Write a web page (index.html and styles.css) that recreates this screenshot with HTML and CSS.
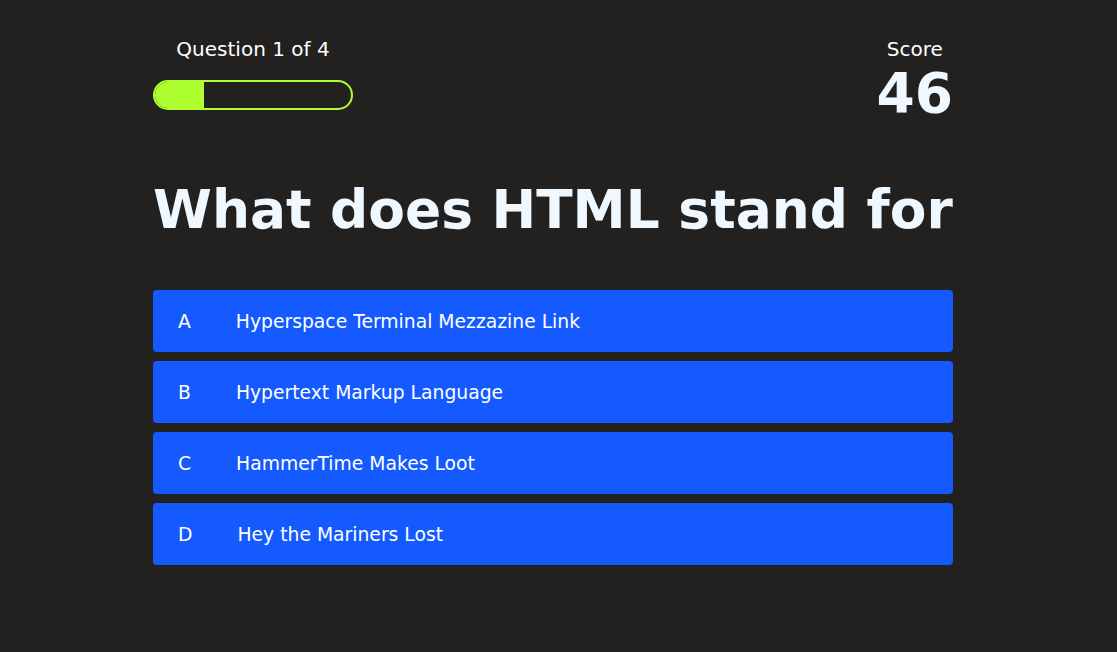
FILE: index.html
```html
<!DOCTYPE html>
<html lang="en">
<head>
<meta charset="utf-8">
<title>Quiz</title>
<link rel="stylesheet" href="styles.css">
</head>
<body>
<main class="quiz">
  <header class="hud">
    <div class="hud-item">
      <p class="hud-label">Question 1 of 4</p>
      <div class="progress"><div class="progress-fill" style="width: 25%"></div></div>
    </div>
    <div class="hud-item score">
      <p class="hud-label">Score</p>
      <p class="score-value">46</p>
    </div>
  </header>
  <h1 class="question">What does HTML stand for</h1>
  <ul class="choices">
    <li class="choice"><span class="choice-prefix">A</span><span class="choice-text">Hyperspace Terminal Mezzazine Link</span></li>
    <li class="choice"><span class="choice-prefix">B</span><span class="choice-text">Hypertext Markup Language</span></li>
    <li class="choice"><span class="choice-prefix">C</span><span class="choice-text">HammerTime Makes Loot</span></li>
    <li class="choice"><span class="choice-prefix">D</span><span class="choice-text">Hey the Mariners Lost</span></li>
  </ul>
</main>
</body>
</html>
```

FILE: styles.css
```css
html, body {
  margin: 0;
  height: 100%;
}
body {
  background: #232120;
  color: #f0f8ff;
  font-family: Verdana, "DejaVu Sans", sans-serif;
  padding-right: 11px;
}
.quiz {
  width: 800px;
  margin: 0 auto;
  padding-top: 36px;
}
.hud {
  display: flex;
  justify-content: space-between;
  align-items: flex-start;
}
.hud-item {
  display: flex;
  flex-direction: column;
  align-items: center;
}
.hud-label {
  margin: 0;
  font-size: 20px;
  line-height: 26px;
  color: #ffffff;
}
.progress {
  margin-top: 18px;
  width: 200px;
  height: 30px;
  box-sizing: border-box;
  border: 2px solid #adff2f;
  border-radius: 15px;
  overflow: hidden;
}
.progress-fill {
  height: 100%;
  background: #adff2f;
}
.score-value {
  margin: 0;
  font-size: 55px;
  font-weight: bold;
  line-height: 62px;
}
.question {
  margin: 54px 0 0;
  font-size: 53.4px;
  line-height: 64px;
  font-weight: bold;
  white-space: nowrap;
}
.choices {
  list-style: none;
  margin: 48px 0 0;
  padding: 0;
  display: flex;
  flex-direction: column;
  gap: 9px;
}
.choice {
  display: flex;
  align-items: center;
  height: 62px;
  background: #145aff;
  border-radius: 4px;
  color: #ffffff;
  font-size: 18.75px;
  padding-left: 25px;
}
.choice-prefix {
  margin-right: 45px;
}
```
